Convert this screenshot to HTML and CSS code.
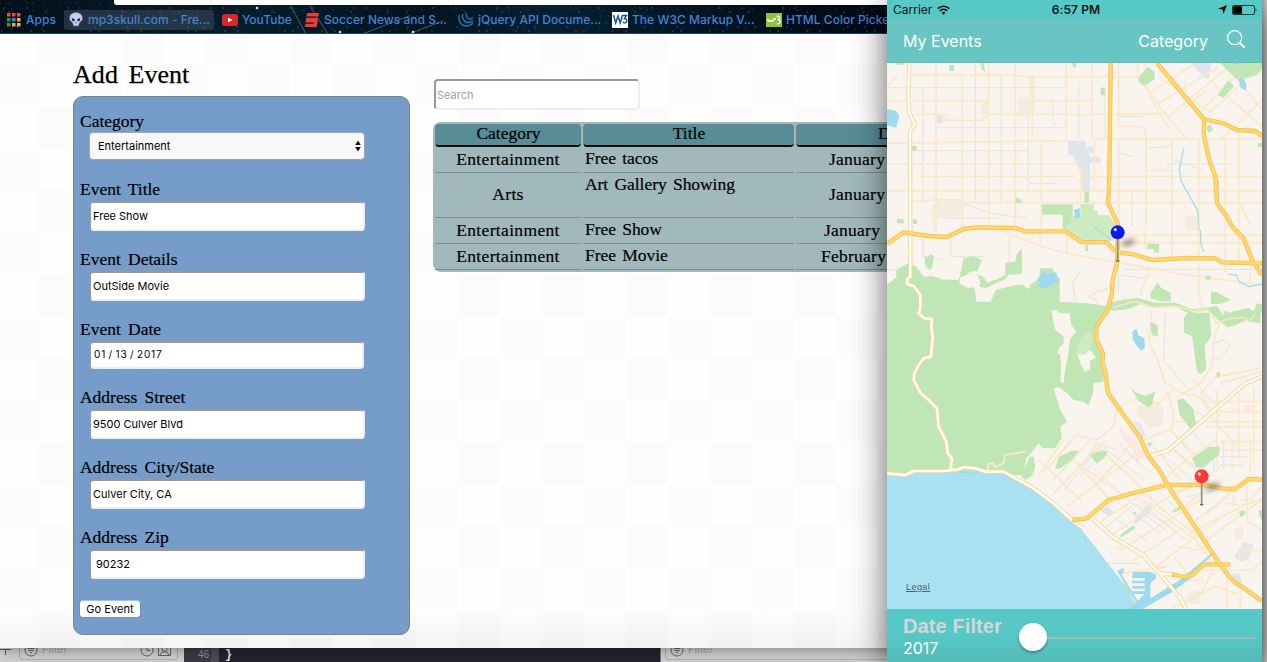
FILE: index.html
```html
<!DOCTYPE html>
<html lang="en">
<head>
<meta charset="utf-8">
<title>Add Event</title>
<link rel="stylesheet" href="styles.css">
</head>
<body>
<div class="desktop">

  <div class="editor">
    <div class="filter-strip left">
      <svg class="plus" width="12" height="14" viewBox="0 0 12 14"><path d="M0 .5h11M5.500 0v6" stroke="#555" fill="none"/></svg>
      <div class="filter-box">
        <svg width="14" height="14" viewBox="0 0 14 14" fill="none" stroke="#666"><circle cx="7" cy="7" r="6"/><path d="M3.5 5.5h7M4.5 7.5h5M6 9.5h2"/></svg>
        <span>Filter</span>
        <svg class="push" width="32" height="14" viewBox="0 0 32 14" fill="none" stroke="#666"><circle cx="7" cy="7" r="6"/><path d="M7 3v4.500h3M18.500 1h12v11.500h-12zM20 12l2-3h5l2 3"/><circle cx="24.500" cy="6" r="2.500"/></svg>
      </div>
    </div>
    <div class="code"><span class="line-no">46</span><span class="brace">}</span></div>
    <div class="filter-strip right">
      <div class="filter-box">
        <svg width="14" height="14" viewBox="0 0 14 14" fill="none" stroke="#666"><circle cx="7" cy="7" r="6"/><path d="M3.5 5.5h7M4.5 7.5h5M6 9.5h2"/></svg>
        <span>Filter</span>
      </div>
    </div>
  </div>

  <div class="browser">
    <div class="bookmarks">
      <svg class="stars" width="887" height="34" viewBox="0 0 887 34" fill="none" stroke-linecap="round">
        <g stroke="#8ea5ae" stroke-width="1">
          <path d="M4 8H887" stroke-dasharray="0 23 0 41 0 12 0 67"/>
          <path d="M9 12H887" stroke-dasharray="0 37 0 19 0 58"/>
          <path d="M2 31H887" stroke-dasharray="0 29 0 13 0 47 0 8"/>
          <path d="M17 27H887" stroke-dasharray="0 61 0 17 0 32"/>
        </g>
        <g stroke="#48616d" stroke-width="1">
          <path d="M0 3H112" stroke-dasharray="0 11 0 17 0 5"/>
          <path d="M3 10H887" stroke-dasharray="0 9 0 21 0 14 0 31"/>
          <path d="M8 16H887" stroke-dasharray="0 17 0 8 0 39"/>
          <path d="M5 23H887" stroke-dasharray="0 13 0 28 0 7 0 22"/>
          <path d="M12 29H887" stroke-dasharray="0 11 0 19 0 34"/>
        </g>
        <path d="M291 6l15 28M310 6l18 28M365 33l44-17M411 33l32-12" stroke="#41606f"/>
        <path d="M257 8h.1M340 32h.1M413 32h.1" stroke="#c6e7f0" stroke-width="2.500"/>
      </svg>
      <div class="tab-edge"></div>
      <div class="bm apps">
        <svg width="14" height="14" viewBox="0 0 14 14"><path d="M0 0h3.500v3.500H0zM5 0h3.500v3.500H5zM10 0h3.500v3.500H10z" fill="#f0453c"/><path d="M0 5h3.500v3.500H0zM0 10h3.500v3.500H0z" fill="#1fa15d"/><path d="M5 5h3.500v3.500H5z" fill="#2b8cf0"/><path d="M10 5h3.500v3.500H10zM5 10h3.500v3.500H5zM10 10h3.500v3.500H10z" fill="#f7ab38"/></svg>
        <span>Apps</span>
      </div>
      <div class="bm skull">
        <svg width="14" height="15" viewBox="0 0 14 15"><path d="M7 .5C3 .5.500 3 .5 6c0 2 1 3.500 2.800 4.300L4.500 14h5l1.200-3.700C12.500 9.500 13.500 8 13.500 6c0-3-2.500-5.500-6.500-5.500z" fill="#c9ccf5" stroke="#5b6390" stroke-width=".6"/><path d="M2.800 6l3 1.200-.5 2.300-2-.8zM11.200 6l-3 1.200.5 2.300 2-.8zM6.500 10.500h1v1h-1z" fill="#1b1d3a"/></svg>
        <span>mp3skull.com - Fre...</span>
      </div>
      <div class="bm youtube">
        <svg width="16" height="12" viewBox="0 0 16 12"><rect width="16" height="12" rx="2.500" fill="#d8262a"/><path d="M6 3.500v5L10.500 6z" fill="#fff"/></svg>
        <span>YouTube</span>
      </div>
      <div class="bm espn">
        <svg width="14" height="14" viewBox="0 0 14 14"><path d="M2 0h12l-.6 3.500H1.400zM1.100 4.800h12l-.3 2.200-1 7H0l.5-3.300h8.100l.2-1.200H.5z" fill="#f03c35"/></svg>
        <span>Soccer News and S...</span>
      </div>
      <div class="bm jquery">
        <svg width="16" height="14" viewBox="0 0 16 14" fill="none" stroke="#2373b0" stroke-width="1.500"><path d="M1.500 2C-.5 7 3 13 8 13c3 0 5-1 7-3"/><path d="M4.800 1C3.500 5 6 9.500 10 9.500c2 0 3.500-.5 5-2"/><path d="M8.500.5C7.500 3.500 9.500 6 12 6c1.200 0 2-.5 3-1"/></svg>
        <span>jQuery API Docume...</span>
      </div>
      <div class="bm w3c">
        <svg width="16" height="16" viewBox="0 0 16 16" fill="none"><path d="M0 0h16v16H0z" fill="#fff"/><path d="M1.500 3l2.200 8L6 4l2.200 7L10.500 3" stroke="#125a9c" stroke-width="1.500"/><path d="M11 3.500h3.500L12.300 6.500c2 0 2.700 1.200 2.500 2.700-.3 2-2.600 2.300-4 .8" stroke="#174c78" stroke-width="1.300"/></svg>
        <span>The W3C Markup V...</span>
      </div>
      <div class="bm picker">
        <svg width="16" height="14" viewBox="0 0 16 14" fill="none" stroke="#fff" stroke-width="1.500"><path d="M0 0h16v14H0z" fill="#8bc53f" stroke="none"/><path d="M1.500 6c.5 3 2.500 3 3 .5.500 2.500 3 2.500 3.500-.5l2-.3M10.500 3.500c3-1.500 4.500 2 1.200 3 4 .2 2.800 5-.7 4"/></svg>
        <span>HTML Color Picker</span>
      </div>
    </div>

    <main class="page">
      <section class="add">
        <h1>Add Event</h1>
        <form class="panel">
          <div class="field"><label>Category</label>
            <div class="select">Entertainment<svg width="6" height="12" viewBox="0 0 6 12"><path d="M3 .5L5.800 5H.2zM3 11.500L5.800 7H.2z" fill="#111"/></svg></div></div>
          <div class="field"><label>Event Title</label><div class="input">Free Show</div></div>
          <div class="field"><label>Event Details</label><div class="input">OutSide Movie</div></div>
          <div class="field"><label>Event Date</label><div class="input date">01<i>/</i>13<i>/</i>2017</div></div>
          <div class="field"><label>Address Street</label><div class="input">9500 Culver Blvd</div></div>
          <div class="field"><label>Address City/State</label><div class="input">Culver City, CA</div></div>
          <div class="field"><label>Address Zip</label><div class="input zip">90232</div></div>
          <button class="go" type="button">Go Event</button>
        </form>
      </section>
      <section class="list">
        <div class="search">Search</div>
        <div class="table">
          <div class="row head"><div>Category</div><div>Title</div><div>Date</div></div>
          <div class="row"><div>Entertainment</div><div class="title">Free tacos</div><div class="when">January</div></div>
          <div class="row tall"><div>Arts</div><div class="title">Art Gallery Showing</div><div class="when">January</div></div>
          <div class="row"><div>Entertainment</div><div class="title">Free Show</div><div class="when mid">January</div></div>
          <div class="row"><div>Entertainment</div><div class="title">Free Movie</div><div class="when long">February</div></div>
        </div>
      </section>
    </main>
  </div>

  <div class="right-edge"></div>

  <div class="phone">
    <div class="status">
      <div class="carrier">Carrier
        <svg width="13" height="10" viewBox="0 0 13 10" fill="none" stroke="#0a1414" stroke-width="1.600"><path d="M.7 3.600c3.300-3.200 8.300-3.200 11.600 0M2.800 5.900c2.100-2 5.300-2 7.400 0"/><path d="M4.500 7.600L6.500 9.700l2-2.100c-1.200-1-2.800-1-4 0z" fill="#0a1414" stroke="none"/></svg>
      </div>
      <div class="clock">6:57 PM</div>
      <div class="battery">
        <svg width="9" height="9" viewBox="0 0 9 9"><path d="M9 0L5.500 9 4.500 4.500 0 3.700z" fill="#0a1414"/></svg>
        <svg width="25" height="10" viewBox="0 0 25 10"><rect x=".5" y=".5" width="22" height="9" rx="1.500" fill="none" stroke="#17393a"/><path d="M1.200 1.200H10v7.600H1.200z"/><path d="M23.500 3.200c1.300.6 1.300 3 0 3.600z" fill="#17393a"/></svg>
      </div>
    </div>
    <div class="nav">
      <span class="my">My Events</span>
      <span class="cat">Category</span>
      <svg width="19" height="19" viewBox="0 0 19 19" fill="none" stroke="#fff"><circle cx="7.700" cy="7.700" r="7" stroke-width="1.200"/><path d="M12.700 12.700l5 5" stroke-width="2"/></svg>
    </div>
    <div class="map">
      <svg width="375" height="546" viewBox="0 189 1125 1638" fill="none" stroke-linejoin="round">
        <defs>
          <filter id="soft" x="-80%" y="-150%" width="260%" height="400%"><feGaussianBlur stdDeviation="8"/></filter>
          <path id="minor" d="M67 189L64 284L67 339L83 374L69 394L70 830L62 835L60 852L80 858L100 885L100 925L95 940L112 955L135 957L133 985L137 1010L132 1070L110 1075L95 1095L82 1120L80 1140L100 1178L125 1200L150 1225L155 1280L178 1325L182 1360L195 1375L190 1415M0 1420l55 5 25-12h90l40-4 22-8 38 5 25 9 55 0 90 50 60 45 60 55 30 20M615 1555l65 58 88 52 55 62 55 65 20 36M820 1720l40 4M785 1370l60-20 80-70 150-130 50-20"/>
          <path id="freeway" d="M671 189L667 534L663 609L693 674L690 790L677 840L675 880L662 930L628 980L628 1020L648 1060L646 1090L655 1115L663 1180L760 1315L785 1370L820 1415L848 1465L1000 1695L1035 1740L1125 1803M0 732L50 697L125 708L180 711L230 687L270 682L385 684L415 694L535 694L583 726L660 727L685 755M695 758L735 762L770 772L795 780L900 774L985 775L1005 787L1125 790M810 189L950 357L1010 370L1050 390L1105 393L1125 408M952 357L950 400L965 475L985 530L990 610L1020 650L1035 680L1070 715L1095 780L1125 825M555 1560l45-5 65-55 70-20 105-25h115l60 12h30l40-30 40 2M855 1723l40 8 25-8 30-30h80"/>
        </defs>
        <path d="M0 189h1125v1638H0z" fill="#f9f4ee"/>

        <!-- built-up blocks and airports -->
        <g fill="#f4ecdf"><path d="M425 225h18v117h-50v-50h32zM140 610l20-12h55l15 20v25l-20 12h-60l-12-20zM285 305h18v40h-18zM895 648h38v45h-38z"/>
          <g transform="translate(0 690)"><path d="M750 530l60-15 20 20-5 50-40 10-35-40z"/></g>
          <g transform="translate(0 1320)"><path d="M900 462l38-14v44h-30zM1045 268l25-8-4 38-24 2z"/></g></g>
        <g fill="#dfe5eb"><path d="M543 422h52v18h24v18h-12v14h34v18h-32v80h-25v-52l-28-52h-13zM150 346h18v24h-18zM912 189h60l-5 45-12 2z"/>
          <g transform="translate(0 1320)"><path d="M738 240l55-56-2 32-48 36zM640 210l20-12 22 20-14 12zM1035 405l22-5 6 28-20 12z"/><path d="M1040 352l30-45 30 5-15 45-20 8z" fill="#e6e7e8"/></g></g>
        <g fill="#fbe9e6"><path d="M697 1278l30 25 35 30 20 38-30 10-20-38-30-30zM1072 1215h24v20h-24z"/></g>
        <path d="M735 1265l22 0 22 45-25 5z" fill="#e8e8e8"/>

        <!-- local streets -->
        <g stroke="#e6e2dc" stroke-width="3">
          <path d="M0 263H535M150 383H540M75 452H420M424 550h80M108 262v350M265 189v415M343 225v380M497 300v60l8 18M424 345v230M575 245v170M654 260v160M735 570v110M770 512h85M840 492h200M690 350h80M780 445l60-5 20-15M700 460l40 10M860 480l90 30M230 610l80 30 110 15M170 655h165M385 189v18M895 240v60M0 260l30-35"/>
          <g transform="translate(0 690)"><path d="M108 20v60l60 10M192 30v50h100M367 20v90M583 120l-28 40 12 55M694 95v95l50 45M697 135l80 10 20-15M705 118h420M835 240l-5 150 75 90M980 340l30-12 20 22-30 35-30 0M885 520l70 40M910 440l80 90M590 700l40-60 60 20M850 600l60 70M890 560l60 90M700 640l60 60M640 650l60 70M930 500l70 60"/></g>
          <g transform="translate(0 1320)"><path d="M500 120l110-120M530 150l125-150M470 95l90-95M680 230l100 75M710 200l110 80M660 260l85-70 130 90M700 160l140 115M755 180l140 120M820 160l150 140M670 60l80 70M620 85l90 85M900 170l120-25M950 220l80-55M980 50v50M1010 0v90M1035 0v90M840 240l-80 55M1000 50h80M1000 75h70M650 20l120 100M580 110l80-90M700 20l90 80M660 370h100M850 20l110 90M820 40l100 80"/></g>
        </g>
        <g stroke="#fbe8c8" stroke-width="5">
          <path d="M75 225h310l20 5h350M80 302h225M440 302h180M85 343h92v18h108l18-18h240M545 345l280-5M0 430l540-8M0 492h570M95 530h470M590 530h535M0 572h1125M75 605l60-5h85l12 8h700M935 608h190M147 189v505M226 225v465M305 189v130l-14 25M305 345v340M385 205v480M463 425v265M436 225v190M538 189v233M614 189v225M695 189v190h70l12 18v285M775 189v45l20 70 55 85M695 425v245M855 420v265M935 415v275M1015 415v275M1055 390v300M622 422v150M570 490l12 35v80M690 345l130-3M615 417h510M147 605l-12 35 12 55M752 189v45l85 110 60 70M785 280L925 189M815 310l180-110M845 350l180-150M890 325l70-55M1000 420l125-120M935 340l150-150M965 340l160-145M970 240l80 75 75 65M1020 200l105 130M815 230l160 110M1060 610l30 65M0 302h60"/>
          <g transform="translate(0 690)"><path d="M460 0v50M540 0v68M340 0l125 50 75 20 135 25 35 5 160 30 235 32M775 0v60M855 0v85M935 0v90M1015 0v125M1055 0v100M1090 100v60M698 15h427M698 38h427M640 255l-14-45-22-8 30-18 25-5 25-35M0 120h30l40-20M785 120l-25 75M935 100v90l12 45M795 240l-10 90 30 70 20 60 55 30 50-30 35-50 8-90 15-40M1000 460l125-35M945 490l25 60M990 480v230M1055 470v220M1100 470v230M970 515h155M975 545h150M840 485l20 60-5 50-85 35M680 590l10-55 60-30 65 15 45-45M680 590l-50 40-65-15-75 90M880 490l60 10 55 90 60 60M850 600l80 80M1000 635h125M1000 660h125M860 575l265 0M955 590h170M940 490l50-50 130-25"/></g>
          <g transform="translate(0 1320)"><path d="M455 105l75-105M500 160L655 0M540 200L780 20M455 60l70 65 60 60M535 45l145 100M620 10l110 100M665 175L560 60M640 245l185-120M665 290l280-185M700 330l240-150M740 360l240-155M800 385l200-150M740 0l-60 75-60 65M690 330l30-40M765 180l155 115 55 70M730 110l90 95 110 80M870 160l65-30 80-60M905 280l180-90 40-12M930 320l195-140M895 200l85-80M960 225l70-70M860 315l70 15 35-15M980 390l-35 65-95 50M1020 400v105M950 390l145 0 30-25M1060 430v75M1070 335l55-5M1060 180l30 0 35-40M1040 130v60M1080 105v90M1090 10v90M860 350l40 50-20 55M700 400l140-20M880 420l70 0M880 500l100-60 70 20M1010 190l70 5v50l45 25M800 20l80 100M840 110l70-60 80-50M860 30l120 110"/></g>
        </g>

        <!-- parks -->
        <g fill="#c0e6b5">
          <path d="M187 196h14v17h-14zM282 189h8l4 26-10-6zM557 189h10v13h-10zM27 189h22v5H27zM640 264l12-2 2 25-12-3zM755 230l28-30 20 15v22l-30 20-18-10zM993 285l30-45 18 18-32 36zM1000 189l125 0v20l-20 18-55 12zM957 382l12-8 10 14-14 12zM1112 429h13v12h-13zM73 438h16v14H73zM385 590l18 10v8h-18zM30 658h20v12H30zM78 658h12v14H78zM465 613h92v35l40 30-70 8v-42h-62zM592 574h14v34h-14zM985 540l10 0 2 60-8-5z"/>
          <path d="M580 612h40v20h12v13h35l22 38-10 40-70-2-30 10-50-40 22-25 3-20h26z" fill="#cdebc0"/>
          <g transform="translate(0 690)">
            <path d="M0 165L28 142V120L63 100L88 110L110 140L135 138L165 148L213 150L218 142L230 85L258 78L285 90L270 125L220 142L217 160L245 175L270 160L320 153L355 135L355 98L385 95L388 75L404 55L405 130L382 134L370 162L410 165L425 178L432 162L456 146L460 115L497 115L502 133L518 145V215L600 220L660 228L635 280L628 290V330L648 370L650 455L620 460L618 490L605 526L590 515L560 510L540 490L515 470L500 475L518 535L540 575L520 590L525 625L500 655L465 655L470 640L445 635L420 670L410 735H0z"/>
            <path d="M113 85l18-12 10 6-5 35-12 5-10-15zM781 42l35 0v26h-15v-10h-20zM790 190l22-32 10 15 28 15 2 26-25 0-35-8zM972 185l15 0 45 25-35 12-25 0zM660 235l15-20 75-12 55 15 60 0 50 20 75-10 20 30 30-14 45-10 15 10 10-24 25 5v20l-15 5v30l-45-8-35 15-20 5-35-30-20-22-60 10-45-22-60 5-40-10-40 15-40 5zM1010 242l30 10v22l-20 18-10-12zM903 248l65 0 5 70-20 30 5 70-18 15-10-10-15-105-24-10v-45zM790 275l22 10v35l-18-5zM987 428l12-3v18l-10-2zM730 472l15 15 30 10 30-12-8 30-8 18-35-20zM870 510l18-5 30 30 12 60-15 8-38-50zM955 137h16v12h-14zM595 45h8v18h-8z"/>
          </g>
          <g transform="translate(0 1320)">
            <path d="M403 110l20-50 5-10 12 0 5 30-8 25-20 15zM403 0h115l-12 25-42-5-10-10-10 15-25 30zM505 85l10-35 40-18 22 0-25 30-35 25zM609 45l20-10 35-2-10 18-25 20zM915 55l50-35 35 0-5 25-48 40-20-5zM700 285l38-30 8 10-45 28zM857 212l22-14 4 6-20 14zM1055 215l16-5 5 12-14 10zM1115 210l10 0v30l-8-12zM740 216h8v8h-8zM780 10l18-5-10 18z"/>
          </g>
        </g>
        <g fill="#f9f4ee" transform="translate(0 690)">
          <path d="M493 240l15 0 10 10 30 0 5 35 15 20-18 20-8 60-8 35-4 40-10-5 2-40-2-40-10-5 5-15 15-15 0-20-25-20-5-20zM570 365l12-15 10 8 20 5 15 20-18 10 0 25-15 8-14-25zM245 128l-30 32 48 15 5 40h43l15-35 60-15 0-30-20-2-15 18-35 12-25-15-5-20-25-5z"/>
        </g>
        <path d="M270 822l18 8 15 20 20-12 5 10-30 16-22-4 5-12z" fill="#c0e6b5"/>
        <path d="M575 1025l20-25 18 0 5 30-25 35-25-5z" fill="#cdebc0"/>
        <path d="M680 922l60-18 65 18 60-4 55 16 40-8 30 45 30-14 50-5 15 12 20-20" stroke="#f7e6bd" stroke-width="5"/>
        <g transform="translate(0 1320)" fill="#c0e6b5"><path d="M480 180l60 55 85 85 40 65 55 55 35 67h-30l-60-102-80-110-105-100z"/></g>

        <!-- water -->
        <path d="M0 1425l55-2 25-12h80l30-4 100 10 70 0 50 25 70 45 60 55 50 55 55 70 50 65 35 68V1827H0z" fill="#a9e0f2"/>
        <path d="M720 1760L700 1725L735 1800L740 1827H720z" fill="#a9e0f2"/>
        <g fill="#9edaee">
          <path d="M0 328l28 5 9 15-10 35-27-8zM1055 238l12-4 12 20-3 18-15-8zM560 630l18-6 2 26-14 6zM1035 189h25l-10 6z"/>
          <g transform="translate(0 690)"><path d="M460 135l8-10 12 5 28-3 5 32-20 5-20 12-20-8 5-12-8-5zM736 305l12-10 6 20 18 10 2 28-10 10-15-15-12-20zM205 730l20-8 50 8z"/></g>
          <g transform="translate(0 1320)"><path d="M738 395l50 0 18 8 2 12-18 15v45l60-38 55-32 12 5-65 48-85 49h-40l46-45h-38v-8h38v-8h-38v-8h38v-8h-38v-8h38v-8h-38zM690 392l20-8v15l-10 5z"/></g>
        </g>
        <g stroke="#a6ddee" stroke-width="4"><path d="M890 447l-13 60 5 35 50 90 4 58M620 680l50 38M940 690l2 45 8 20"/><path d="M1023 823l25 2 8 20 30 15 39-8"/><path d="M695 1715l55 90M865 1755l110-92" stroke-width="7"/></g>

        <!-- arterial roads, outline then fill -->
        <use href="#minor" stroke="#ead6aa" stroke-width="13"/>
        <use href="#minor" stroke="#fffbe4" stroke-width="8"/>
        <path d="M303 1415l0-22 14-4 8 12 25-12 4-24 60-10" stroke="#f9edcb" stroke-width="5"/>

        <!-- freeways -->
        <use href="#freeway" stroke="#f3b66a" stroke-width="13"/>
        <use href="#freeway" stroke="#ffd95f" stroke-width="9"/>

        <!-- pins -->
        <g>
          <ellipse cx="724" cy="728" rx="22" ry="9" fill="#5a5546" opacity=".6" filter="url(#soft)" transform="rotate(-20 724 728)"/>
          <path d="M692 715v68" stroke="#8b8b8b" stroke-width="5"/><path d="M687 783h10" stroke="#666" stroke-width="4"/>
          <circle cx="692" cy="697" r="21" fill="#0a1cf2"/><circle cx="685" cy="689" r="5" fill="#cdd6ff"/>
          <ellipse cx="977" cy="1460" rx="24" ry="9" fill="#5a5546" opacity=".6" filter="url(#soft)" transform="rotate(-20 977 1460)"/>
          <path d="M944 1448v66" stroke="#8b8b8b" stroke-width="5"/><path d="M939 1514h10" stroke="#666" stroke-width="4"/>
          <circle cx="944" cy="1429" r="21" fill="#ff3538"/><circle cx="937" cy="1422" r="5" fill="#ffd9d9"/>
        </g>
      </svg>
      <span class="legal">Legal</span>
    </div>
    <div class="date-filter">
      <div class="labels"><b>Date Filter</b><span>2017</span></div>
      <div class="slider"><div class="knob"></div><div class="track"></div></div>
    </div>
  </div>
</div>
</body>
</html>
```
FILE: styles.css
```css
* { box-sizing: border-box; }
body { margin: 0; font-family: Inter, sans-serif; }
svg { display: block; flex: none; }
.desktop { position: relative; width: 1267px; height: 662px; overflow: hidden; background: #bdbdbd; }

/* editor window behind the browser */
.editor { position: absolute; left: 0; top: 640px; width: 1267px; height: 22px; display: flex; }
.filter-strip { background: #d2d2d2; display: flex; padding-top: 2px; }
.filter-strip.left { width: 184px; }
.filter-strip.right { flex: 1; border-left: 1px solid #777; }
.plus { margin: 7px 7px 0 0; }
.filter-box { display: flex; gap: 4px; width: 159px; height: 18px; padding: 0 5px 0 4px; border: 1px solid #b0b0b0; border-radius: 3px; font-size: 11px; line-height: 13px; letter-spacing: -.1px; color: #a2a2a2; }
.right .filter-box { width: 400px; margin-left: 4px; }
.push { margin-left: auto; }
.code { width: 476px; background: #22232d; display: flex; color: #f0f0f0; font: 12px/30px "Liberation Mono", monospace; }
.line-no { width: 35px; padding-left: 14px; background: linear-gradient(90deg, #3a3b44 27px, #4b4c57 27px); font-family: "Liberation Sans", sans-serif; font-size: 10px; color: #999; }
.brace { margin-left: 6px; font-weight: bold; }

/* browser window */
.browser { position: absolute; left: 0; top: 0; width: 1000px; height: 648px; box-shadow: 0 2px 14px rgba(0,0,0,.38); }
.bookmarks { position: relative; height: 34px; border-bottom: 1px solid #1e416b; background: linear-gradient(90deg, #03101b, #061d2c 25%, #031320 42%, #052033 55%, #020d18 80%, #010711); display: flex; align-items: center; padding: 6px 0 0 7px; font-size: 12px; font-weight: 500; letter-spacing: .02px; color: #4383d2; white-space: nowrap; }
.stars { position: absolute; left: 0; top: 0; }
.tab-edge { position: absolute; left: 114px; right: 0; top: 0; height: 5px; background: #fff; border-bottom-left-radius: 3px; }
.bm { position: relative; display: flex; align-items: center; gap: 5px; height: 20px; }
.apps { width: 57px; }
.skull { width: 150px; padding-left: 5px; border-radius: 3px; background: rgba(75,88,105,.45); }
.youtube { width: 83px; margin-left: 8px; gap: 4px; }
.espn { width: 153px; }
.jquery { width: 154px; gap: 4px; }
.w3c { width: 154px; gap: 4px; }
.picker { gap: 4px; }

.page { height: 614px; display: flex; padding: 26px 0 0 73px; font-family: "Liberation Serif", serif; color: #000;
  background:
    linear-gradient(180deg, transparent 570px, rgba(0,0,0,.04)),
    conic-gradient(#fcfcfc 25%, #fefefe 0 50%, #fbfbfb 0 75%, #fefefe 0) 38px 30px / 84px 84px; }
.add { width: 337px; }
h1 { margin: 0; height: 36px; font-size: 26px; line-height: 29px; font-weight: 400; letter-spacing: .05px; word-spacing: 4px; white-space: nowrap; -webkit-text-stroke: .25px #000; }
.panel { height: 539px; padding: 12px 6px 0; display: flex; flex-direction: column; gap: 16px; border: 1px solid #808080; border-radius: 10px; background: #769cca; }
.field label { display: block; height: 24px; font-size: 17.5px; line-height: 25px; letter-spacing: -.02px; word-spacing: 3px; -webkit-text-stroke: .2px #000; }
.input, .select { width: 275px; margin-left: 10px; font-family: Inter, sans-serif; font-size: 11px; color: #000; }
.input { height: 30px; border: 2px solid; border-color: #999 #eee #eee #999; border-left-width: 1px; border-radius: 4px; background: #fff; line-height: 26px; padding-left: 2px; }
.select { width: 276px; height: 28px; margin: -1px 0 1px 9px; display: flex; align-items: center; justify-content: space-between; padding: 0 3px 0 8px; border: 1px solid #a5a5a5; border-radius: 4px; background: #f8f8f8; }
.date { width: 274px; height: 28px; line-height: 23px; padding-left: 3px; font-size: 10px; letter-spacing: .85px; }
.date i { font-style: normal; margin: 0 2.5px; }
.zip { padding-left: 5px; }
.go { width: 62px; height: 18px; margin: 5px 0 0 -1px; padding: 0; border: 1px solid #7390b5; border-top-color: #a8bdd8; border-radius: 4px; background: #fff; color: #000; font: 11px/14px Inter, sans-serif; letter-spacing: .05px; }

.list { margin-left: 23px; padding-top: 19px; width: 560px; }
.search { width: 206px; height: 31px; margin-left: 1px; border: 2px solid; border-color: #999 #eee #eee #999; border-radius: 4px; background: #fff; color: #a0a0a0; font: 11px/28px Inter, sans-serif; padding-left: 1px; }
.table { margin-top: 12px; padding: 2px; height: 150px; border-radius: 8px; background: #a1b9bc; font-size: 17.5px; letter-spacing: .35px; -webkit-text-stroke: .2px #000; }
.row { display: grid; grid-template-columns: 146px 211px 196px; grid-template-rows: 100%; gap: 2px; height: 26px; line-height: 24px; text-align: center; word-spacing: 2px; white-space: nowrap; }
.row > div { border-bottom: 1px solid #858b8e; }
.row.head { height: 23px; line-height: 19px; letter-spacing: 0; }
.head > div { background: #588d98; border-left: 1px solid #817f83; border-bottom: 2px solid #050909; border-radius: 4px; }
.row.tall { height: 45px; line-height: 42px; }
.row .title { text-align: left; padding-left: 2px; line-height: 23px; letter-spacing: -.05px; }
.row .when { text-align: left; padding-left: 33px; letter-spacing: .25px; }
.row .mid { padding-left: 28px; }
.row .long { padding-left: 25px; }

.right-edge { position: absolute; right: 0; top: 0; width: 5px; height: 662px; background: linear-gradient(90deg, #aaa, #d3d3d3); }

/* simulator window */
.phone { position: absolute; left: 887px; top: 0; width: 375px; height: 662px; display: flex; flex-direction: column; box-shadow: 0 8px 32px rgba(0,0,0,.62); background: #56c8c6; color: #fff; }
.status { height: 19px; display: grid; grid-template-columns: 1fr auto 1fr; align-items: center; padding: 0 6px; color: #0a1414; font-size: 12px; background: #56c8c6; }
.carrier, .battery { display: flex; align-items: center; gap: 5px; }
.clock { font-weight: 600; letter-spacing: .1px; padding-left: 3px; }
.battery { justify-content: flex-end; gap: 5px; margin-right: -1px; }
.nav { height: 44px; display: flex; align-items: center; padding: 0 16px; background: #68c5c4; font-size: 16px; border-bottom: 1px solid #62bcb9; }
.cat { margin-left: auto; margin-right: 19px; }
.nav svg { margin: -2px 0 0; }
.map { position: relative; height: 546px; }
.legal { position: absolute; left: 19px; bottom: 16px; font: 9px/12px "Liberation Sans", sans-serif; letter-spacing: .45px; color: #47656f; text-decoration: underline; }
.date-filter { height: 53px; display: flex; padding: 6px 7px 0 16px; background: linear-gradient(#56c8c6 45%, #54bcb8); }
.labels { width: 116px; display: flex; flex-direction: column; }
.labels b { font: bold 20px/23px "Liberation Sans", sans-serif; letter-spacing: .1px; color: #d5d5d5; white-space: nowrap; }
.labels span { font-size: 16px; line-height: 20px; font-weight: 400; }
.slider { flex: 1; height: 44px; display: flex; align-items: center; }
.knob { width: 28px; height: 28px; border-radius: 50%; background: #fff; box-shadow: 0 2px 3px rgba(0,0,0,.3); }
.track { flex: 1; height: 2px; margin-top: 2px; background: #b1b5b6; }
```
